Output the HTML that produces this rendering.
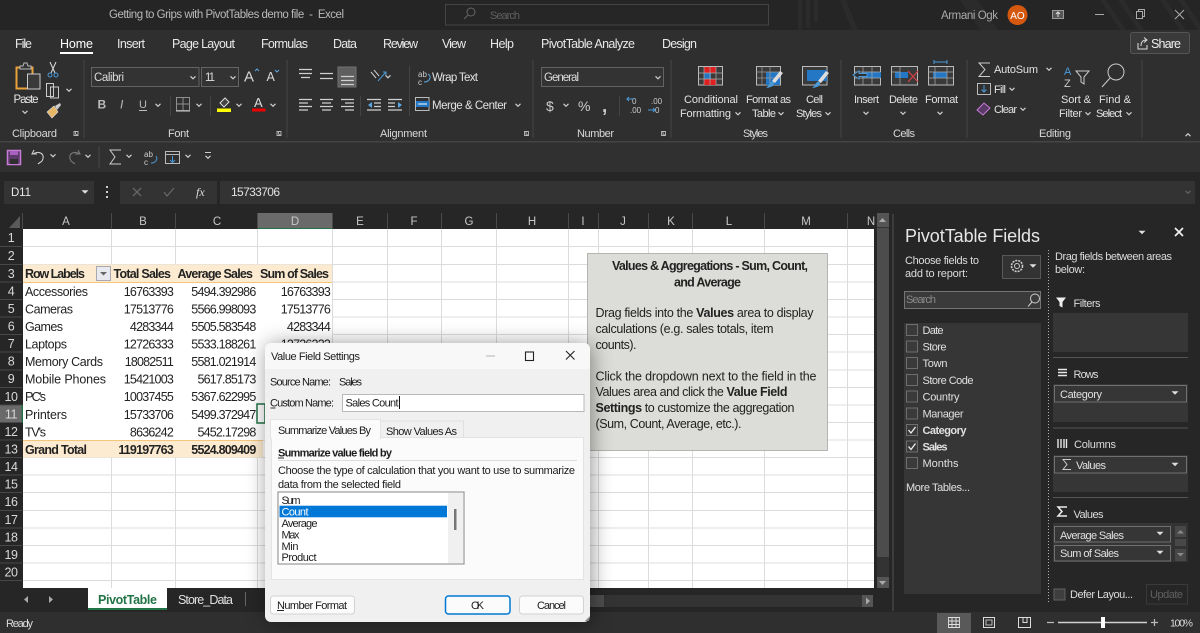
<!DOCTYPE html>
<html lang="en"><head><meta charset="utf-8"><title>Excel</title>
<style>
html,body{margin:0;padding:0;background:#262626;width:1200px;height:633px;overflow:hidden}
svg{display:block;font-family:"Liberation Sans",sans-serif;font-size:11px;fill:#dcdcdc}
.c text{font-size:12.5px;fill:#222}
.n text{font-size:12.5px;fill:#222;letter-spacing:-.8px;text-anchor:end}
.b{font-weight:bold}
.r text{font-size:12.5px;fill:#d8d8d8;text-anchor:middle;letter-spacing:-.4px}
.h text{font-size:11.5px;fill:#c8c8c8;text-anchor:middle}
.d text{font-size:11px;fill:#1c1c1c}
.tb text{font-size:12.5px;fill:#222}
.l{stroke:#444;stroke-width:1;fill:none}
</style></head><body>
<svg width="1200" height="633" viewBox="0 0 1200 633" xmlns="http://www.w3.org/2000/svg">
<defs>
<path id="ch" d="M-2.500 -1.200L0 1.300L2.500 -1.200" fill="none" stroke="#cfcfcf" stroke-width="1.200"/>
<path id="tr" d="M-3.500 -1.800H3.500L0 1.800Z" fill="#dedede" stroke="none"/>
<g id="ln"><path d="M-.5 .5H3.500V4.500H-.5Z M1 .5V3 L3.500 4.500" fill="none" stroke="#b8b8b8" stroke-width=".9"/></g>
<path id="cb" d="M.5 .5H11.500V11.500H.5Z" fill="#3a3a3a" stroke="#6e6e6e"/>
</defs>

<!-- window regions -->
<rect width="1200" height="633" fill="#262626"/>
<rect width="1200" height="30" fill="#252525"/>
<g fill="#2b2b2b">
<path d="M798 0h4v30h-4zM806 0h4v28h-4zM814 0h4v22h-4zM840 0l12 30h6L846 0zM960 0h18l20 30h-18zM1100 0h6l20 30h-6zM1118 0h6l20 30h-6zM1160 0h6l20 30h-6zM1178 0h6l16 24v6h-2z"/>
</g>
<rect y="30" width="1200" height="111" fill="#2f2f2f"/>
<rect y="141" width="1200" height="1.500" fill="#444"/>
<rect y="142.500" width="1200" height="29.500" fill="#303030"/>

<!-- title bar -->
<text x="109" y="18" fill="#b9b9b9" font-size="11.500" textLength="235">Getting to Grips with PivotTables demo file &#160;- &#160;Excel</text>
<rect x="445.500" y="4.500" width="323" height="20.500" fill="#262626" stroke="#444"/>
<circle cx="471" cy="12" r="4" fill="none" stroke="#666"/><path d="M468 15l-4 4" stroke="#666"/>
<text x="490" y="19" fill="#5f5f5f" font-size="11" textLength="30">Search</text>
<text x="941" y="19" fill="#aaa" font-size="11.500" textLength="57">Armani Ogk</text>
<circle cx="1017.500" cy="15" r="10" fill="#d5580f"/>
<text x="1017.500" y="19" fill="#fff" font-size="10" text-anchor="middle">AO</text>
<rect x="1052.500" y="10.500" width="11" height="8" fill="#555" stroke="#999"/><path d="M1058 17v-5M1056 14l2-2 2 2" stroke="#ddd" fill="none"/>
<path d="M1095 14.500h9" stroke="#aaa"/>
<path d="M1136.500 11.500h6v7h-6zM1138.500 11.500v-2h6v7h-2" fill="none" stroke="#aaa"/>
<path d="M1175 10l9 9M1184 10l-9 9" stroke="#aaa"/>

<!-- tabs -->
<g font-size="12.500" fill="#e8e8e8">
<text x="15" y="48" textLength="17">File</text>
<text x="60" y="48" textLength="33" fill="#fff">Home</text>
<text x="117" y="48" textLength="28">Insert</text>
<text x="172" y="48" textLength="63">Page Layout</text>
<text x="261" y="48" textLength="47">Formulas</text>
<text x="333" y="48" textLength="24">Data</text>
<text x="383" y="48" textLength="35">Review</text>
<text x="442" y="48" textLength="24">View</text>
<text x="490" y="48" textLength="24">Help</text>
<text x="541" y="48" textLength="94">PivotTable Analyze</text>
<text x="662" y="48" textLength="35">Design</text>
</g>
<rect x="60" y="52" width="33" height="2" fill="#fff"/>
<rect x="1130.500" y="32.500" width="59" height="21" rx="2" fill="#3a3a3a" stroke="#555"/>
<text x="1151" y="48" font-size="12.500" fill="#eee" textLength="30">Share</text>
<path d="M1138 43v6h9v-4M1141 46c0-4 2-6 5-6M1144 37.500l3 2.500-3 2.500" fill="none" stroke="#ddd"/>

<!-- group separators -->
<g class="l"><path d="M84 60v78M287 60v78M533 60v78M671 60v78M841 60v78M967 60v78M1142 60v78"/></g>

<!-- clipboard -->
<path d="M16.500 67.500h16v21h-16z" fill="none" stroke="#e9a23b" stroke-width="2"/>
<path d="M20 69v-3h3l1-3h3l1 3h3v3z" fill="#333" stroke="#bbb"/>
<rect x="27.500" y="74" width="12.500" height="15" fill="#3a3a3a" stroke="#ccc"/>
<text x="13.500" y="103" font-size="11.500" fill="#e6e6e6" textLength="25">Paste</text>
<use href="#ch" x="25" y="112"/>
<path d="M50 62l5 11M56 62l-5 11" stroke="#ddd" fill="none"/><circle cx="50" cy="75" r="2" fill="none" stroke="#4a9ad8"/><circle cx="56" cy="75" r="2" fill="none" stroke="#4a9ad8"/>
<path d="M46.500 83.500h7v13h-7zM50.500 87h8v11h-8z" fill="#333" stroke="#ccc"/>
<use href="#ch" x="69" y="90"/>
<path d="M47 112l7-6 4 6-6 6z" fill="#e8b765" stroke="#ddd" stroke-width=".6"/><path d="M55 106l5-3 1 2-4 5" fill="#ccc"/>
<text x="12" y="137" font-size="11" fill="#d8d8d8" textLength="45">Clipboard</text>
<use href="#ln" x="74.500" y="131"/>

<!-- font -->
<rect x="91.500" y="67.500" width="107.500" height="19" fill="#333" stroke="#636363"/>
<text x="94" y="81" font-size="11.500" textLength="30">Calibri</text>
<use href="#ch" x="193" y="77.500"/>
<rect x="201.500" y="67.500" width="37" height="19" fill="#333" stroke="#636363"/>
<text x="205" y="81" font-size="11.500" textLength="10">11</text>
<use href="#ch" x="233" y="77.500"/>
<text x="244" y="81.500" font-size="15" fill="#d8d8d8">A</text><path d="M255 71l2-2 2 2" fill="none" stroke="#5aa7e0"/>
<text x="266.500" y="81" font-size="12.500" fill="#d8d8d8">A</text><path d="M275 70l2 2 2-2" fill="none" stroke="#5aa7e0"/>
<text x="97.500" y="108.500" class="b" font-size="12" fill="#bbb">B</text>
<text x="120" y="108.500" font-size="12" font-style="italic" fill="#bbb">I</text>
<text x="139" y="108" font-size="11" fill="#bbb">U</text><path d="M139 110.500h8" stroke="#bbb"/>
<use href="#ch" x="158" y="105"/>
<path d="M170.500 96v20M210.500 96v20" stroke="#444"/>
<path d="M176.500 97.500h13v13h-13zM183 97.500v13M176.500 104h13" fill="none" stroke="#8f8f8f"/><path d="M176 111h14" stroke="#ccc"/>
<use href="#ch" x="199" y="105"/>
<path d="M220 103l5-5 4 4-5 5z" fill="#444" stroke="#ddd"/>
<rect x="217" y="108.500" width="14" height="3.500" fill="#ff0"/>
<use href="#ch" x="239" y="105"/>
<text x="254" y="107" font-size="13" fill="#ddd">A</text>
<rect x="252" y="108.500" width="13.500" height="3" fill="#e00"/>
<use href="#ch" x="273" y="105"/>
<text x="168" y="137" font-size="11" fill="#d8d8d8" textLength="21">Font</text>
<use href="#ln" x="277.500" y="131"/>

<!-- alignment -->
<rect x="338" y="67" width="18" height="20" fill="#5f5f5f" stroke="#707070"/>
<g stroke="#cfcfcf" stroke-width="1.200" fill="none">
<path d="M299 69.500h13M299 73.500h13M301 77.500h9"/>
<path d="M320 73.500h13M320 78.500h13"/>
<path d="M341 76.500h13M341 80.500h13M341 84.500h13"/>
<path d="M299 99.500h13M299 103h9M299 106.500h13M299 110h9M320 99.500h13M322 103h9M320 106.500h13M322 110h9M341 99.500h13M345 103h9M341 106.500h13M345 110h9"/>
<path d="M367 99.500h14M374 103h7M374 106.500h7M367 110h14M388 99.500h14M388 103h7M388 106.500h7M388 110h14"/>
</g>
<path d="M372 102l-4 3 4 3zM398 102l4 3-4 3z" fill="#5aa7e0"/>
<path d="M371 72l5 6M374 70l5 6" fill="none" stroke="#ccc"/>
<path d="M378 81l8-9M383 72h3v3" stroke="#4a9ad8" fill="none"/>
<use href="#ch" x="388" y="76.500"/>
<path d="M360.500 96v20M409.500 66v50" stroke="#444"/>
<text x="418" y="77" font-size="8" fill="#ccc">ab</text><text x="418" y="85" font-size="8" fill="#ccc">c</text>
<path d="M428 74c4 2 2 8-4 8" fill="none" stroke="#5aa7e0"/>
<text x="432" y="81" font-size="11.500" fill="#e2e2e2" textLength="46">Wrap Text</text>
<rect x="415.500" y="97.500" width="13.500" height="13" fill="none" stroke="#bbb"/><rect x="416" y="101" width="13" height="6" fill="#2477c4"/><path d="M418 104h9" stroke="#fff"/>
<text x="432" y="109" font-size="11.500" fill="#e2e2e2" textLength="75">Merge &amp; Center</text>
<use href="#ch" x="518" y="105"/>
<text x="380" y="137" font-size="11" fill="#d8d8d8" textLength="47">Alignment</text>
<use href="#ln" x="525" y="131"/>

<!-- number -->
<rect x="541.500" y="67.500" width="122" height="19" fill="#333" stroke="#636363"/>
<text x="544" y="81" font-size="11.500" textLength="35">General</text>
<use href="#ch" x="658" y="77.500"/>
<text x="546" y="111" font-size="14" fill="#ccc">$</text><use href="#ch" x="566" y="105"/>
<text x="578" y="111" font-size="14" fill="#ccc">%</text>
<text x="602" y="112" font-size="19" fill="#ccc" class="b">,</text>
<path d="M619.500 96v20" stroke="#444"/>
<text x="632" y="104" font-size="8" fill="#ccc">0</text><text x="630" y="113" font-size="8" fill="#ccc">.00</text><path d="M634 99h-7l2-2m-2 2l2 2" stroke="#4a9ad8" fill="none"/>
<text x="651" y="104" font-size="8" fill="#ccc">.00</text><text x="655" y="113" font-size="8" fill="#ccc">0</text><path d="M648 110h7l-2-2m2 2l-2 2" stroke="#4a9ad8" fill="none"/>
<text x="577" y="137" font-size="11" fill="#d8d8d8" textLength="37">Number</text>
<use href="#ln" x="662" y="131"/>

<!-- styles -->
<g fill="none" stroke="#bbb">
<rect x="698.500" y="66.500" width="24" height="18.500" fill="#3a3a3a"/>
<rect x="704" y="67" width="12" height="6" fill="#e02020" stroke="none"/><rect x="704" y="73" width="7" height="6" fill="#2477c4" stroke="none"/><rect x="704" y="79" width="12" height="6" fill="#e02020" stroke="none"/>
<path d="M698.500 73h24M698.500 79h24M704 66.500v18.500M710 66.500v18.500M716 66.500v18.500" stroke="#aaa" stroke-width=".7"/>
<rect x="756.500" y="66.500" width="24" height="18.500" fill="#3a3a3a"/>
<rect x="766" y="72" width="14" height="13" fill="#2477c4" stroke="none"/>
<path d="M756.500 72h24M756.500 78h24M762 66.500v18.500M770 66.500v18.500" stroke="#999" stroke-width=".7"/>
<rect x="802.500" y="66.500" width="24.500" height="18.500" fill="#3a3a3a"/>
<rect x="807" y="70" width="20" height="11" fill="#2477c4" stroke="none"/>
<rect x="854.500" y="66.500" width="26" height="18.500" fill="#3a3a3a"/>
<rect x="862" y="72" width="19" height="6" fill="#2477c4" stroke="none"/>
<path d="M854.500 72h26M854.500 78h26M863 66.500v18.500M872 66.500v18.500" stroke="#aaa" stroke-width=".7"/>
<rect x="891.500" y="66.500" width="26" height="18.500" fill="#3a3a3a"/>
<rect x="895" y="72" width="13" height="6" fill="#2477c4" stroke="none"/>
<path d="M891.500 72h8M900 66.500v18.500" stroke="#aaa" stroke-width=".7"/>
<rect x="928.500" y="66.500" width="25" height="18.500" fill="#3a3a3a"/>
<rect x="933" y="72" width="14" height="6" fill="#2477c4" stroke="none"/>
<path d="M928.500 72h25M928.500 78h25M935 66.500v18.500M947 66.500v18.500" stroke="#aaa" stroke-width=".7"/>
</g>
<path d="M780 71l3 2-8 10-3-2z" fill="#ddd"/><path d="M771 82c3-1 4 2 2 4-2 1-5 2-7 2 2-1 3-4 5-6z" fill="#4a9ad8"/>
<path d="M826 71l3 2-8 10-3-2z" fill="#ddd"/><path d="M817 82c3-1 4 2 2 4-2 1-5 2-7 2 2-1 3-4 5-6z" fill="#4a9ad8"/>
<path d="M853 75l6-4v2.500h8v3h-8v2.500z" fill="#2f2f2f" stroke="#4a9ad8"/>
<path d="M908 71l10 11M918 71l-10 11" stroke="#d04040" stroke-width="1.300"/>
<path d="M934 62h13M934 60v4M947 60v4" stroke="#4a9ad8" fill="none"/>
<g font-size="11" fill="#e2e2e2">
<text x="684" y="103" textLength="54">Conditional</text>
<text x="680" y="117" textLength="51">Formatting</text><use href="#ch" x="738" y="113.500"/>
<text x="746" y="103" textLength="45">Format as</text>
<text x="752" y="117" textLength="24">Table</text><use href="#ch" x="781" y="113.500"/>
<text x="806" y="103" textLength="17">Cell</text>
<text x="796" y="117" textLength="26">Styles</text><use href="#ch" x="828" y="113.500"/>
<text x="854" y="103" textLength="25">Insert</text><use href="#ch" x="866" y="113"/>
<text x="889" y="103" textLength="29">Delete</text><use href="#ch" x="903" y="113"/>
<text x="925" y="103" textLength="33">Format</text><use href="#ch" x="940" y="113"/>
<text x="743" y="137" textLength="25" fill="#d8d8d8">Styles</text>
<text x="893" y="137" textLength="22" fill="#d8d8d8">Cells</text>
<text x="1039" y="137" textLength="32" fill="#d8d8d8">Editing</text>
<text x="994" y="73" textLength="44">AutoSum</text>
<text x="994" y="93" textLength="12">Fill</text>
<text x="994" y="113" textLength="23">Clear</text>
<text x="1061" y="103" textLength="30">Sort &amp;</text>
<text x="1059" y="117" textLength="23">Filter</text><use href="#ch" x="1088" y="113.500"/>
<text x="1099" y="103" textLength="32">Find &amp;</text>
<text x="1096" y="117" textLength="26">Select</text><use href="#ch" x="1129" y="113.500"/>
</g>
<!-- editing icons -->
<path d="M990 63h-11l6 6.500-6 7h11" fill="none" stroke="#ccc"/>
<use href="#ch" x="1049" y="69"/>
<rect x="977.500" y="83.500" width="13" height="11" fill="none" stroke="#bbb"/><path d="M984 85v7M981.500 89.500l2.500 2.500 2.500-2.500" fill="none" stroke="#4a9ad8"/>
<use href="#ch" x="1012" y="89"/>
<path d="M977 110l7-7 6 5-7 7z" fill="#5a3a66" stroke="#c77cd8"/>
<use href="#ch" x="1023" y="109"/>
<text x="1064" y="75" font-size="11" fill="#4a9ad8">A</text><text x="1064" y="87" font-size="11" fill="#ccc">Z</text>
<path d="M1076 71h13l-5 6v7l-3-2v-5z" fill="none" stroke="#ccc"/>
<circle cx="1116" cy="72" r="8" fill="none" stroke="#ccc"/><path d="M1110 78l-8 9" stroke="#ccc"/>
<use href="#ch" x="1188" y="135" transform="rotate(180 1188 135)"/>

<!-- QAT -->
<path d="M7.500 150.500h13v14h-13z" fill="#5c3a6a" stroke="#c77cd8" stroke-width="1.500"/><rect x="10" y="151" width="8" height="4" fill="#a861be"/><rect x="10" y="159" width="8" height="5" fill="#2f2f2f"/>
<path d="M34 150l-2 4h5M33 154c6-4 13 0 9 7-1 1-3 2-4 3" fill="none" stroke="#ccc" stroke-width="1.100"/>
<use href="#ch" x="53" y="155.500"/>
<path d="M78 150l2 4h-5M80 154c-6-4-13 0-9 7 1 1 3 2 4 3" fill="none" stroke="#777" stroke-width="1.100"/>
<use href="#ch" x="88" y="156"/>
<path d="M99 146v22" stroke="#484848"/>
<path d="M121 150h-11l5 7-5 7h11" fill="none" stroke="#ccc"/>
<use href="#ch" x="129" y="156"/>
<text x="144" y="157" font-size="8" fill="#ccc">ab</text><text x="144" y="165" font-size="8" fill="#ccc">c</text>
<path d="M156 156c2 3 0 7-5 7" fill="none" stroke="#4a9ad8"/>
<rect x="165.500" y="151.500" width="14" height="12" fill="none" stroke="#bbb"/><path d="M165.500 154.500h14" stroke="#bbb"/><path d="M172.500 156v6M170 160l2.500 2.500 2.500-2.500" fill="none" stroke="#4a9ad8"/>
<use href="#ch" x="188" y="156"/>
<path d="M205 152.500h6" stroke="#ccc"/><use href="#ch" x="208" y="157"/>

<!-- formula bar -->
<rect x="4" y="181" width="90" height="23" fill="#333"/>
<text x="11" y="196" font-size="11.500" fill="#e8e8e8" textLength="20">D11</text>
<use href="#tr" x="85" y="192"/>
<g fill="#ccc"><rect x="106" y="186" width="2" height="2"/><rect x="106" y="191" width="2" height="2"/><rect x="106" y="196" width="2" height="2"/></g>
<rect x="120" y="181" width="97" height="23" fill="#333"/>
<path d="M133 188l8 8M141 188l-8 8" stroke="#666" stroke-width="1.300"/>
<path d="M164 192l3 4 7-8" fill="none" stroke="#666" stroke-width="1.300"/>
<text x="196" y="196" font-size="12" font-style="italic" fill="#ddd" font-family="Liberation Serif">fx</text>
<rect x="220" y="181" width="975" height="23" fill="#333"/>
<text x="231" y="196" font-size="12" fill="#e2e2e2" textLength="49">15733706</text>
<use href="#ch" x="1188" y="192" opacity=".3"/>

<!-- column headers -->
<rect x="0" y="208" width="874" height="21" fill="#262626"/>
<path d="M9 228L20 216V228Z" fill="#5a5a5a"/>
<rect x="258" y="213" width="74" height="16" fill="#6a6a6a"/>
<rect x="258" y="228" width="74" height="1.500" fill="#217346"/>
<g stroke="#4a4a4a"><path d="M22.500 213v16M111.500 213v16M175.500 213v16M257.500 213v16M332.500 213v16M387.500 213v16M441.500 213v16M496.500 213v16M568.500 213v16M598.500 213v16M648.500 213v16M692.500 213v16M764.500 213v16M847.500 213v16"/></g>
<g class="h">
<text x="66" y="225">A</text><text x="143" y="225">B</text><text x="217" y="225">C</text><text x="295" y="225">D</text><text x="360" y="225">E</text><text x="414" y="225">F</text><text x="469" y="225">G</text><text x="532" y="225">H</text><text x="583" y="225">I</text><text x="623" y="225">J</text><text x="671" y="225">K</text><text x="729" y="225">L</text><text x="806" y="225">M</text><text x="871" y="225">N</text>
</g>

<!-- grid -->
<rect x="23" y="229" width="851" height="359" fill="#fff"/>
<g stroke="#dcdcdc" stroke-width="1">
<path d="M111.500 229v359M175.500 229v359M257.500 229v359M332.500 229v359M387.500 229v359M441.500 229v359M496.500 229v359M568.500 229v359M598.500 229v359M648.500 229v359M692.500 229v359M764.500 229v359M847.500 229v359"/>
<path d="M23 246.500h851M23 264.500h851M23 282h851M23 299.500h851M23 317h851M23 334.500h851M23 352h851M23 370h851M23 387.500h851M23 405h851M23 422.500h851M23 440h851M23 457.500h851M23 475h851M23 492.500h851M23 510.500h851M23 528h851M23 545.500h851M23 563h851M23 580.500h851"/>
</g>
<rect x="23" y="283" width="309" height="157" fill="#fff"/>
<rect x="23" y="264.500" width="309" height="18" fill="#fcebd0"/>
<rect x="23" y="282" width="309" height="1" fill="#f4c67c"/>
<rect x="23" y="440" width="240" height="17.500" fill="#fcebd0"/>
<rect x="23" y="440" width="240" height="1" fill="#f4c67c"/>
<rect x="96.500" y="266.500" width="14" height="14" fill="#e8e8ef" stroke="#a8a8b0"/>
<path d="M100 272h7l-3.500 3.500z" fill="#666"/>

<!-- row headers -->
<rect x="0" y="229" width="22" height="359" fill="#262626"/>
<rect x="0" y="405" width="22" height="17.500" fill="#6a6a6a"/>
<rect x="21.500" y="405" width="1.500" height="17.500" fill="#217346"/>
<g stroke="#484848"><path d="M0 246.500h22M0 264.500h22M0 282h22M0 299.500h22M0 317h22M0 334.500h22M0 352h22M0 370h22M0 387.500h22M0 405h22M0 422.500h22M0 440h22M0 457.500h22M0 475h22M0 492.500h22M0 510.500h22M0 528h22M0 545.500h22M0 563h22M0 580.500h22"/></g>
<g class="r">
<text x="11" y="242">1</text><text x="11" y="260">2</text><text x="11" y="278">3</text><text x="11" y="295.500">4</text><text x="11" y="313">5</text><text x="11" y="330.500">6</text><text x="11" y="348">7</text><text x="11" y="365.500">8</text><text x="11" y="383">9</text><text x="11" y="401">10</text><text x="11" y="418.500" fill="#eee">11</text><text x="11" y="436">12</text><text x="11" y="453.500">13</text><text x="11" y="471">14</text><text x="11" y="488.500">15</text><text x="11" y="506">16</text><text x="11" y="524">17</text><text x="11" y="541.500">18</text><text x="11" y="559">19</text><text x="11" y="576.500">20</text>
</g>

<!-- sheet text -->
<g class="c">
<text x="25" y="278" class="b" textLength="60">Row Labels</text>
<text x="25" y="296" textLength="63">Accessories</text>
<text x="25" y="313.500" textLength="48">Cameras</text>
<text x="25" y="331" textLength="38">Games</text>
<text x="25" y="348.500" textLength="42">Laptops</text>
<text x="25" y="366" textLength="78">Memory Cards</text>
<text x="25" y="383.500" textLength="81">Mobile Phones</text>
<text x="25" y="401" textLength="21">PC's</text>
<text x="25" y="419" textLength="42">Printers</text>
<text x="25" y="436.500" textLength="21">TV's</text>
<text x="25" y="454" class="b" textLength="62">Grand Total</text>
<text x="113.500" y="278" class="b" textLength="57.500">Total Sales</text>
<text x="177.500" y="278" class="b" textLength="75.500">Average Sales</text>
<text x="260" y="278" class="b" textLength="69">Sum of Sales</text>
</g>
<g class="n">
<text x="173" y="296">16763393</text><text x="173" y="313.500">17513776</text><text x="173" y="331">4283344</text><text x="173" y="348.500">12726333</text><text x="173" y="366">18082511</text><text x="173" y="383.500">15421003</text><text x="173" y="401">10037455</text><text x="173" y="419">15733706</text><text x="173" y="436.500">8636242</text><text x="173" y="454" class="b">119197763</text>
<text x="255.500" y="296">5494.392986</text><text x="255.500" y="313.500">5566.998093</text><text x="255.500" y="331">5505.583548</text><text x="255.500" y="348.500">5533.188261</text><text x="255.500" y="366">5581.021914</text><text x="255.500" y="383.500">5617.85173</text><text x="255.500" y="401">5367.622995</text><text x="255.500" y="419">5499.372947</text><text x="255.500" y="436.500">5452.17298</text><text x="255.500" y="454" class="b">5524.809409</text>
<text x="330" y="296">16763393</text><text x="330" y="313.500">17513776</text><text x="330" y="331">4283344</text><text x="330" y="348.500">12726333</text>
</g>
<rect x="257" y="404" width="8" height="19" fill="#fff" stroke="#217346" stroke-width="1.500"/>

<!-- text box -->
<rect x="587.500" y="253.500" width="240" height="197" fill="#dcdcd8" stroke="#b4b4b0"/>
<g class="tb">
<text x="612" y="270" class="b" textLength="196">Values &amp; Aggregations - Sum, Count,</text>
<text x="674" y="286.500" class="b" textLength="67">and Average</text>
<text x="595.500" y="317" textLength="218">Drag fields into the <tspan class="b">Values</tspan> area to display</text>
<text x="595.500" y="333" textLength="178">calculations (e.g. sales totals, item</text>
<text x="595.500" y="349" textLength="41">counts).</text>
<text x="595.500" y="380.500" textLength="221">Click the dropdown next to the field in the</text>
<text x="595.500" y="396" textLength="192">Values area and click the <tspan class="b">Value Field</tspan></text>
<text x="595.500" y="412" textLength="199"><tspan class="b">Settings</tspan> to customize the aggregation</text>
<text x="595.500" y="428" textLength="146">(Sum, Count, Average, etc.).</text>
</g>

<!-- scrollbars -->
<rect x="877" y="213" width="12" height="375" fill="#333"/>
<rect x="877" y="213" width="12" height="14" fill="#555"/><path d="M879 222l3.500-4 3.500 4z" fill="#aaa"/>
<rect x="877" y="228" width="12" height="329" fill="#4c4c4c"/>
<rect x="877" y="577" width="12" height="11" fill="#555"/><path d="M879 581h7l-3.500 4z" fill="#aaa"/>
<rect x="892" y="214" width="2" height="397" fill="#3c3c3c"/>

<!-- sheet tabs -->
<rect x="0" y="588" width="892" height="24" fill="#262626"/>
<path d="M28 596v7l-4-3.500zM49 596v7l4-3.500z" fill="#aaa"/>
<rect x="88" y="588" width="79" height="20" fill="#fff"/>
<rect x="88" y="608" width="79" height="2" fill="#217346"/>
<text x="98" y="604" class="b" font-size="12.500" fill="#217346" textLength="59">PivotTable</text>
<text x="178" y="604" font-size="12.500" fill="#e0e0e0" textLength="55">Store_Data</text>
<path d="M245.500 592v14" stroke="#666"/>
<rect x="590" y="595" width="272" height="12" fill="#333"/>
<rect x="590" y="595" width="14" height="12" fill="#4d4d4d"/>
<rect x="862" y="595" width="11" height="12" fill="#555"/><path d="M866 597.500l4 3.500-4 3.500z" fill="#aaa"/>

<!-- status bar -->
<rect x="0" y="612" width="1200" height="21" fill="#2f2f2f"/>
<text x="6" y="627" font-size="11" fill="#dcdcdc" textLength="27">Ready</text>
<rect x="937" y="613" width="34" height="20" fill="#595959"/>
<path d="M948.500 617.500h11v10h-11zM948.500 621h11M948.500 624.500h11M952 617.500v10M956 617.500v10" fill="none" stroke="#e0e0e0" stroke-width=".9"/>
<rect x="983.500" y="617.500" width="11" height="10" fill="none" stroke="#ddd"/><rect x="986" y="620" width="6" height="5" fill="none" stroke="#ddd" stroke-width=".8"/>
<path d="M1018.500 617.500h12v10h-12zM1023 617.500v5h4v-5" fill="none" stroke="#ddd"/>
<path d="M1047 622.500h7M1151 622.500h7M1154.500 619v7" stroke="#bbb" stroke-width="1.200"/>
<path d="M1058 622.500h89" stroke="#d0d0d0" stroke-width="1.500"/>
<rect x="1101" y="617" width="4" height="11" fill="#fff"/>
<text x="1170" y="626.500" font-size="10.500" fill="#dcdcdc" textLength="23">100%</text>

<!-- pivot pane -->
<text x="905" y="242" font-size="18" fill="#e6e6e6" textLength="135">PivotTable Fields</text>
<use href="#tr" x="1142" y="232.500"/>
<path d="M1175 228l8 8M1183 228l-8 8" stroke="#f0f0f0" stroke-width="1.700"/>
<g font-size="11" fill="#dcdcdc">
<text x="905" y="264" textLength="74">Choose fields to</text>
<text x="905" y="277" textLength="63">add to report:</text>
<text x="1055" y="260" textLength="117">Drag fields between areas</text>
<text x="1055" y="273" textLength="30">below:</text>
</g>
<rect x="1002.500" y="255.500" width="38" height="23" fill="#333" stroke="#585858"/>
<circle cx="1017" cy="266" r="5.500" fill="none" stroke="#ccc" stroke-dasharray="2 1" stroke-width="1.600"/><circle cx="1017" cy="266" r="2.500" fill="none" stroke="#ccc"/>
<use href="#tr" x="1033" y="266"/>
<rect x="904.500" y="291.500" width="136" height="17" fill="#3a3a3a" stroke="#757575"/>
<text x="906" y="303" font-size="11" fill="#8a8a8a" textLength="30">Search</text>
<circle cx="1035" cy="298.500" r="4.500" fill="none" stroke="#ccc"/><path d="M1032 302l-4 4.500" stroke="#ccc"/>
<rect x="904" y="323" width="137" height="271" fill="#363636"/>
<use href="#cb" x="906" y="324"/><use href="#cb" x="906" y="340.500"/><use href="#cb" x="906" y="357"/><use href="#cb" x="906" y="374"/><use href="#cb" x="906" y="390.500"/><use href="#cb" x="906" y="407.500"/><use href="#cb" x="906" y="424"/><use href="#cb" x="906" y="440.500"/><use href="#cb" x="906" y="457"/>
<path d="M908.500 430l2.500 3 4.500-6M908.500 446.500l2.500 3 4.500-6" fill="none" stroke="#f0f0f0" stroke-width="1.300"/>
<g font-size="11" fill="#e0e0e0">
<text x="922.500" y="334" textLength="21">Date</text>
<text x="922.500" y="350.500" textLength="24">Store</text>
<text x="922.500" y="367" textLength="25">Town</text>
<text x="922.500" y="384" textLength="51">Store Code</text>
<text x="922.500" y="400.500" textLength="37">Country</text>
<text x="922.500" y="417.500" textLength="41">Manager</text>
<text x="922.500" y="434" class="b" textLength="44">Category</text>
<text x="922.500" y="450.500" class="b" textLength="25">Sales</text>
<text x="922.500" y="467" textLength="36">Months</text>
<text x="906" y="491" textLength="64">More Tables...</text>
</g>
<path d="M1048.500 250v354" stroke="#b0b0b0" stroke-dasharray="1 2"/>

<path d="M1056 297.500h10l-3.500 4.500v5.500l-3-1.500v-4z" fill="#eee"/>
<g font-size="11" fill="#dcdcdc">
<text x="1073.500" y="307" textLength="27">Filters</text>
<text x="1073.500" y="378" textLength="25">Rows</text>
<text x="1074" y="448" textLength="42">Columns</text>
<text x="1073.500" y="518" textLength="30">Values</text>
</g>
<rect x="1053" y="313" width="135" height="39" fill="#363636"/>
<path d="M1053 357.500h135M1053 428h135M1053 497.500h135" stroke="#555"/>
<path d="M1058 369.500h9M1058 372.500h9M1058 375.500h9" stroke="#e8e8e8" stroke-width="1.600"/>
<rect x="1053" y="384" width="135" height="38" fill="#363636"/>
<rect x="1054.500" y="385.500" width="132" height="16.500" fill="#363636" stroke="#707070"/>
<text x="1060" y="398" font-size="11" fill="#e0e0e0" textLength="42">Category</text>
<use href="#tr" x="1175" y="393"/>
<path d="M1058 439v9M1061 439v9M1064 439v9M1066.500 439v9" stroke="#e8e8e8" stroke-width="1.400"/>
<rect x="1053" y="455" width="135" height="37" fill="#363636"/>
<rect x="1054.500" y="456.500" width="132" height="16.500" fill="#363636" stroke="#707070"/>
<path d="M1071 459.500h-8l4 5-4 5h8" fill="none" stroke="#ccc"/>
<text x="1076" y="469" font-size="11" fill="#e0e0e0" textLength="30">Values</text>
<use href="#tr" x="1175" y="464.500"/>
<path d="M1067 507h-9l4 4.500-4 4.500h9" fill="none" stroke="#eee" stroke-width="1.500"/>
<rect x="1053" y="523" width="119" height="39" fill="#363636"/>
<rect x="1054.500" y="526.500" width="116" height="15.500" fill="#363636" stroke="#707070"/>
<rect x="1054.500" y="545.500" width="116" height="15.500" fill="#363636" stroke="#707070"/>
<text x="1060" y="539" font-size="11" fill="#e0e0e0" textLength="64">Average Sales</text>
<text x="1060" y="557" font-size="11" fill="#e0e0e0" textLength="59">Sum of Sales</text>
<use href="#tr" x="1160" y="533.500"/><use href="#tr" x="1160" y="552.500"/>
<rect x="1172" y="523" width="16" height="39" fill="#333"/>
<rect x="1175" y="526" width="11" height="11" fill="#484848"/><path d="M1177 533.500l3.500-3.500 3.500 3.500z" fill="#888"/>
<rect x="1175" y="539" width="11" height="7" fill="#484848"/>
<rect x="1175" y="549" width="11" height="12" fill="#484848"/><path d="M1177 553h7l-3.500 3.500z" fill="#888"/>
<rect x="1054" y="589" width="11" height="11" fill="#3e3e3e" stroke="#606060"/>
<text x="1070" y="598" font-size="11" fill="#dcdcdc" textLength="63">Defer Layou...</text>
<rect x="1146.500" y="584.500" width="41" height="19.500" fill="none" stroke="#3a3a3a"/>
<text x="1150" y="598" font-size="11" fill="#606060" textLength="33">Update</text>

<!-- dialog -->
<g style="filter:drop-shadow(2px 1px 10px rgba(0,0,0,.42))">
<rect x="265" y="343" width="325" height="279" rx="6" fill="#f0f0f0"/>
</g>
<path d="M265 369v-20a6 6 0 0 1 6-6h313a6 6 0 0 1 6 6v20z" fill="#f8f8f8"/>
<g class="d">
<text x="271" y="360" textLength="89" fill="#111">Value Field Settings</text>
<text x="270" y="385.500" textLength="61">Source Name:</text>
<text x="339" y="385.500" textLength="23">Sales</text>
<text x="270" y="406.500" textLength="64">Custom Name:</text>
</g>
<path d="M486 356h9" stroke="#c4c4c4" stroke-width="1.300"/>
<rect x="525.500" y="352" width="8" height="8.500" fill="none" stroke="#222" stroke-width="1.100"/>
<path d="M566 351l8.500 8.500M574.500 351l-8.500 8.500" stroke="#222" stroke-width="1.100"/>
<path d="M270.500 408h5" stroke="#333"/>
<rect x="342.500" y="394.500" width="241.500" height="17" fill="#fff" stroke="#b8b8b8"/>
<text x="345.500" y="406.500" font-size="11" fill="#1c1c1c" textLength="53">Sales Count</text>
<path d="M399.500 396v13" stroke="#111"/>
<rect x="380.500" y="421" width="83" height="17" fill="#f0f0f0" stroke="#e0e0e0"/>
<rect x="271.500" y="437.500" width="312" height="142" fill="#fbfbfb" stroke="#e3e3e3"/>
<rect x="270.500" y="419.500" width="110" height="19" fill="#fbfbfb" stroke="#e3e3e3"/>
<rect x="271.500" y="436" width="108" height="3" fill="#fbfbfb"/>
<g class="d">
<text x="278" y="434" textLength="93">Summarize Values By</text>
<text x="386" y="435" textLength="71">Show Values As</text>
<text x="278" y="456.500" class="b" textLength="114">Summarize value field by</text>
<text x="278" y="474" textLength="297">Choose the type of calculation that you want to use to summarize</text>
<text x="278" y="488" textLength="123">data from the selected field</text>
</g>
<path d="M278 458h6" stroke="#333"/>
<path d="M278 460.500h299" stroke="#dcdcdc"/>
<rect x="278" y="492" width="186" height="72" fill="#fff" stroke="#9a9a9a" stroke-width="1.200"/>
<rect x="448" y="493" width="15" height="70" fill="#f0f0f0"/>
<rect x="454" y="509" width="2.500" height="21" fill="#777"/>
<rect x="279.500" y="505.700" width="167.500" height="11.600" fill="#0078d7"/>
<g class="d">
<text x="281.500" y="504" textLength="19">Sum</text>
<text x="281.500" y="515.500" textLength="27" fill="#fff" style="fill:#fff">Count</text>
<text x="281.500" y="527" textLength="36">Average</text>
<text x="281.500" y="538.500" textLength="18">Max</text>
<text x="281.500" y="550" textLength="17">Min</text>
<text x="281.500" y="561" textLength="35">Product</text>
</g>
<rect x="270.500" y="596" width="84" height="18" rx="3" fill="#fbfbfb" stroke="#d2d2d2"/>
<rect x="445.500" y="596" width="64.500" height="18" rx="3" fill="#fbfbfb" stroke="#0078d4" stroke-width="1.500"/>
<rect x="519.500" y="596" width="64" height="18" rx="3" fill="#fbfbfb" stroke="#d2d2d2"/>
<g class="d">
<text x="277" y="609" textLength="70">Number Format</text>
<text x="471" y="609" textLength="13">OK</text>
<text x="537" y="609" textLength="29">Cancel</text>
</g>
<path d="M277 610.500h7" stroke="#222"/>
<path d="M590 616l-5 5h4z" fill="#888"/>
</svg>
</body></html>
